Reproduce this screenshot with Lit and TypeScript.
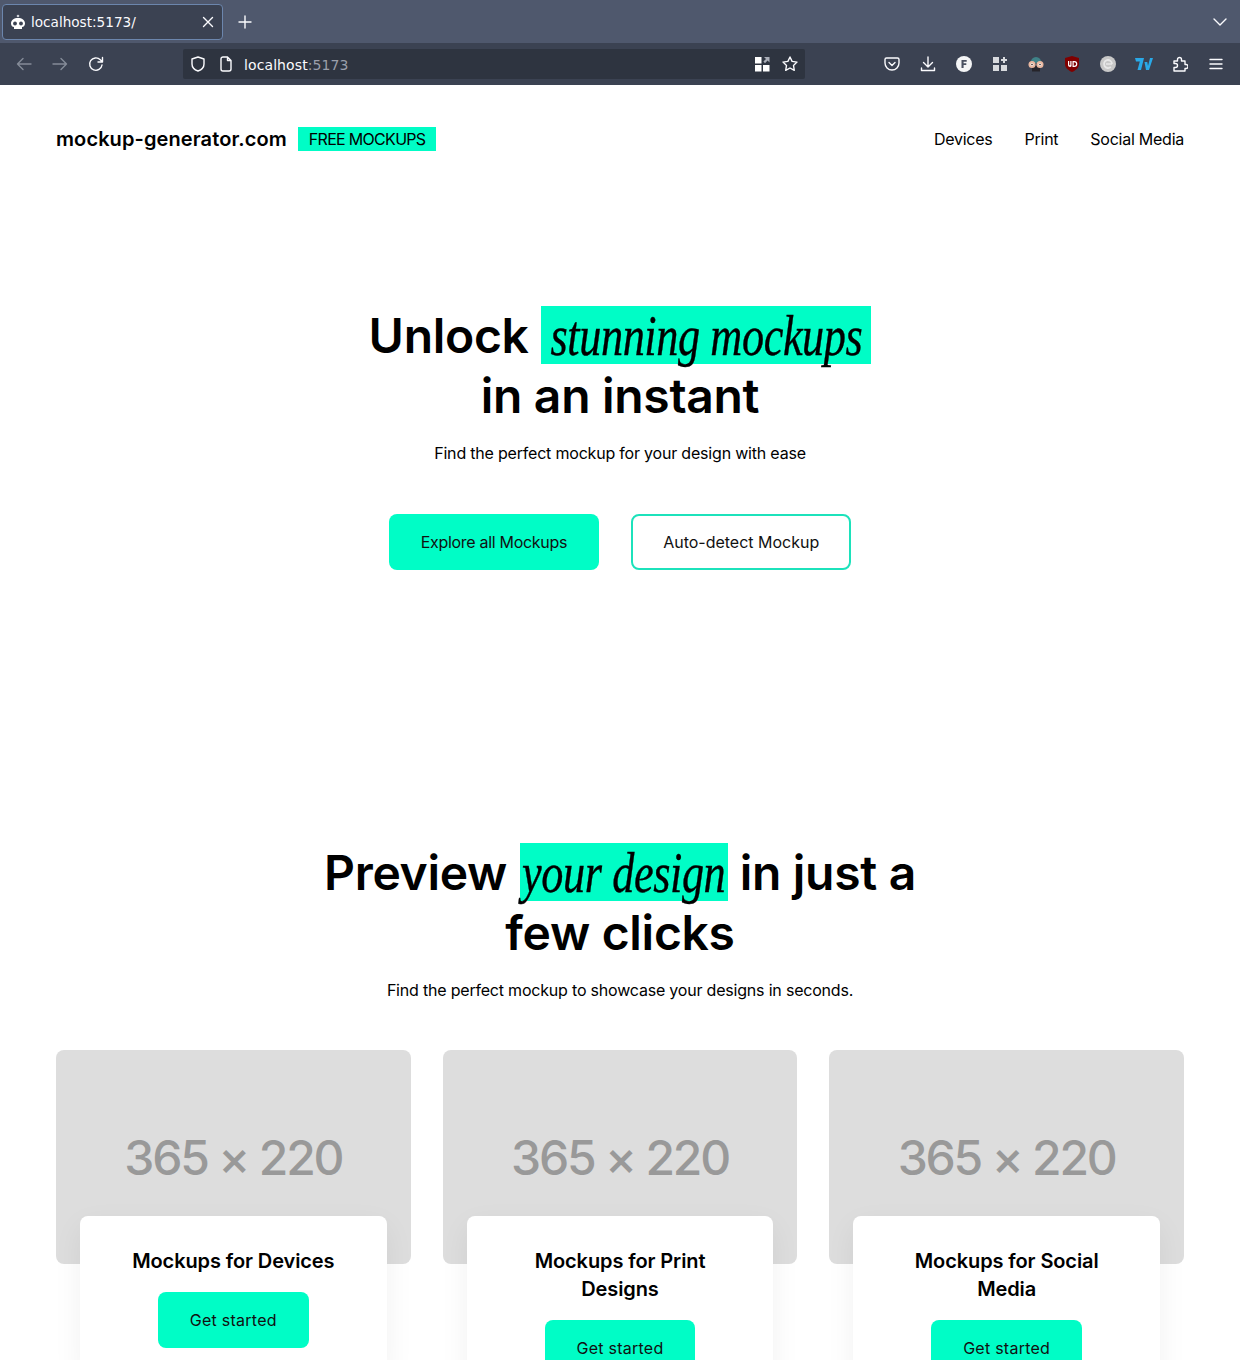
import { LitElement, html, css, svg } from 'lit';
import { customElement } from 'lit/decorators.js';

const cards = [
    { title: 'Mockups for Devices' },
    { title: 'Mockups for Print Designs' },
    { title: 'Mockups for Social Media' },
];

const line = (d: string) => svg`<path d=${d} fill="none" stroke="currentColor" stroke-width="1.4" stroke-linecap="round" stroke-linejoin="round"/>`;

@customElement('browser-chrome')
export class BrowserChrome extends LitElement {
    static styles = css`
      :host {
        display: block;
        font-family: 'DejaVu Sans', sans-serif;
        color: #fbfbfe;
      }

      .tabs {
        height: 43px;
        background: #4f586d;
        display: flex;
        align-items: center;
        padding: 0 12px 0 2px;
        box-sizing: border-box;
      }

      .tab {
        width: 221px;
        height: 36px;
        box-sizing: border-box;
        margin-top: 1px;
        background: #3b4252;
        border: 1px solid #6c86ad;
        border-radius: 4px;
        display: flex;
        align-items: center;
        padding: 0 6px 0 7px;
        gap: 5px;
        font-size: 13.6px;
      }

      .tab-title {
        flex: 1;
      }

      .new-tab {
        margin-left: 14px;
      }

      .spacer {
        flex: 1;
      }

      .toolbar {
        height: 42px;
        background: #3b4252;
        display: flex;
        align-items: center;
      }

      .nav {
        width: 183px;
        display: flex;
        align-items: center;
        gap: 20px;
        padding-left: 16px;
        box-sizing: border-box;
      }

      .dim {
        color: #858b98;
      }

      .urlbar {
        width: 622px;
        height: 30px;
        background: #2e3440;
        border-radius: 2px;
        display: flex;
        align-items: center;
        padding: 0 7px;
        box-sizing: border-box;
        font-size: 14px;
      }

      .urlbar .shield {
        margin-right: 12px;
      }

      .urlbar .page {
        margin-right: 10px;
      }

      .url {
        flex: 1;
        padding-top: 1px;
        letter-spacing: 0.1px;
      }

      .url span {
        color: #9a9fab;
      }

      .grid-icon {
        margin-right: 12px;
      }

      .actions {
        flex: 1;
        display: flex;
        align-items: center;
        justify-content: flex-end;
        gap: 20px;
        padding-right: 16px;
      }

      .wide-icon {
        margin: 0 -1px;
      }

      svg {
        display: block;
        flex: none;
      }
    `;

    render() {
        return html`
      <div class="tabs">
        <div class="tab">
          <svg width="16" height="16" viewBox="0 0 16 16">
            <circle cx="8" cy="2" r="1.300" fill="#c9ccd2" />
            <path d="M1 9.500C1 6 4 4 8 4s7 2 7 5.500c0 2-1.200 3.200-3 3.600V15H4v-1.900C2.200 12.700 1 11.500 1 9.500z" fill="#fff" />
            <circle cx="5" cy="9.500" r="1.900" fill="#3b4252" />
            <circle cx="11" cy="9.500" r="1.900" fill="#3b4252" />
          </svg>
          <span class="tab-title">localhost:5173/</span>
          <svg width="16" height="16" viewBox="0 0 16 16">${line('M3.500 3.500l9 9M12.500 3.500l-9 9')}</svg>
        </div>
        <svg class="new-tab" width="16" height="16" viewBox="0 0 16 16">${line('M8 2v12M2 8h12')}</svg>
        <div class="spacer"></div>
        <svg width="16" height="16" viewBox="0 0 16 16">${line('M2 5l6 6 6-6')}</svg>
      </div>
      <div class="toolbar">
        <div class="nav">
          <svg class="dim" width="16" height="16" viewBox="0 0 16 16">${line('M15 8H1.500M7 2.500L1.500 8 7 13.500')}</svg>
          <svg class="dim" width="16" height="16" viewBox="0 0 16 16">${line('M1 8h13.500M9 2.500L14.500 8 9 13.500')}</svg>
          <svg width="16" height="16" viewBox="0 0 16 16">${line('M14 9a6.200 6.200 0 1 1-1.700-5.200L14.500 6M14.500 1.500V6H10')}</svg>
        </div>
        <div class="urlbar">
          <svg class="shield" width="16" height="16" viewBox="0 0 16 16">${line('M8 1l6 2v5c0 3.500-3 6-6 7-3-1-6-3.500-6-7V3z')}</svg>
          <svg class="page" width="16" height="16" viewBox="0 0 16 16">${line('M3 3a2 2 0 0 1 2-2h4.500L13 4.500V13a2 2 0 0 1-2 2H5a2 2 0 0 1-2-2zM9.500 1v3.500H13')}</svg>
          <div class="url">localhost<span>:5173</span></div>
          <svg class="grid-icon" width="16" height="16" viewBox="0 0 16 16" fill="#fff">
            <rect x="1" y="1" width="6.500" height="6.500" />
            <rect x="1" y="9" width="6.500" height="6.500" />
            <rect x="9" y="9" width="6.500" height="6.500" />
            <path d="M10 1h5.500v5.500l-1.900-1.900L11 7.200 9.400 5.600 12 3z" fill="#a9adb7" />
          </svg>
          <svg width="16" height="16" viewBox="0 0 16 16">${line('M8 1l2.100 4.400 4.900.7-3.500 3.400.8 4.800L8 12l-4.300 2.300.8-4.800L1 6.100l4.900-.7z')}</svg>
        </div>
        <div class="actions">
          <svg width="16" height="16" viewBox="0 0 16 16">${line('M2.500 2h11A1.500 1.500 0 0 1 15 3.500V7a7 7 0 0 1-14 0V3.500A1.500 1.500 0 0 1 2.500 2zM5 6.500l3 3 3-3')}</svg>
          <svg width="16" height="16" viewBox="0 0 16 16">${line('M8 1v10M3.500 6.500L8 11l4.500-4.500M1.500 12v2.500h13V12')}</svg>
          <svg width="16" height="16" viewBox="0 0 16 16">
            <circle cx="8" cy="8" r="8" fill="#f4f5f6" />
            <path d="M5.500 4h5.200v1.800H7.600v1.500h2.700v1.700H7.600V12H5.500z" fill="#4a5161" />
          </svg>
          <svg width="16" height="16" viewBox="0 0 16 16" fill="#d8dade">
            <rect x="1" y="1" width="6" height="6" />
            <rect x="1" y="9" width="6" height="6" />
            <rect x="9" y="9" width="6" height="6" />
            <path d="M11 1h2v2h2v2h-2v2h-2V5H9V3h2z" />
          </svg>
          <svg class="wide-icon" width="18" height="16" viewBox="0 0 18 16">
            <path d="M3.500 7a5.500 6 0 0 1 11 0z" fill="#3f8288" />
            <rect x="5" y="10" width="8" height="5.500" fill="#26242a" />
            <circle cx="5" cy="8.500" r="3.500" fill="#e9b7a0" />
            <circle cx="13" cy="8.500" r="3.500" fill="#e9b7a0" />
            <circle cx="5" cy="8.500" r="1.600" fill="#f7efe8" />
            <circle cx="13" cy="8.500" r="1.600" fill="#f7efe8" />
            <circle cx="5" cy="8.500" r="0.800" fill="#3a2a2a" />
            <circle cx="13" cy="8.500" r="0.800" fill="#3a2a2a" />
          </svg>
          <svg width="16" height="16" viewBox="0 0 16 16">
            <path d="M8 0l7 2v6c0 4-3.500 6.500-7 8-3.500-1.500-7-4-7-8V2z" fill="#800000" />
            <path d="M4 5v4a2 2 0 0 0 3.500 1.300V5H6.300v4a.8.8 0 0 1-1.100 0V5zM8.500 5v6h1.800a3 3 0 0 0 0-6zm1.200 1.200h.6a1.800 1.800 0 0 1 0 3.600h-.6z" fill="#fff" />
          </svg>
          <svg width="16" height="16" viewBox="0 0 16 16">
            <circle cx="8" cy="8" r="8" fill="#c8c8c8" />
            <path d="M12 8a4 4 0 1 0-1.200 2.900" fill="none" stroke="#e8e8e8" stroke-width="1.800" />
            <path d="M6 8h6" stroke="#e8e8e8" stroke-width="1.500" />
          </svg>
          <svg class="wide-icon" width="18" height="16" viewBox="0 0 18 16">
            <path d="M0 2h9L6 14H2.500l2.300-8.500H1z" fill="#29a9e8" />
            <path d="M9.500 6h2.800l.7 4 2-8H18l-4 12h-3z" fill="#29a9e8" />
          </svg>
          <svg width="16" height="16" viewBox="0 0 16 16">${line('M2 5h3.500V3.500a2 2 0 0 1 4 0V5H13v3.500h1a2 2 0 0 1 0 4h-1V15H2v-3.500h1.500a2 2 0 0 0 0-4H2z')}</svg>
          <svg width="16" height="16" viewBox="0 0 16 16">${line('M2 3.500h12M2 8h12M2 12.500h12')}</svg>
        </div>
      </div>
    `;
    }
}

@customElement('app-root')
export class AppRoot extends LitElement {
    static styles = css`
      :host {
        display: block;
        height: 1360px;
        overflow: hidden;
        background: #fff;
        color: #000;
        font-family: 'Inter', 'Noto Sans', sans-serif;
      }

      .page {
        padding: 0 56px;
      }

      header {
        height: 108px;
        display: flex;
        align-items: center;
        justify-content: space-between;
      }

      .brand {
        display: flex;
        align-items: center;
        gap: 11px;
      }

      .logo {
        font-size: 20px;
        font-weight: 600;
        letter-spacing: 0.1px;
      }

      .tag {
        background: #00fdc6;
        font-size: 16px;
        line-height: 24px;
        padding: 0 11px;
        letter-spacing: -0.7px;
      }

      nav {
        display: flex;
        gap: 32px;
        font-size: 16px;
        letter-spacing: -0.25px;
      }

      .hero {
        padding-top: 113px;
        height: 650px;
        box-sizing: border-box;
      }

      .center {
        text-align: center;
      }

      h1,
      h2 {
        margin: 0;
        font-size: 48px;
        line-height: 60px;
        font-weight: 600;
        letter-spacing: -0.3px;
      }

      .mark {
        display: inline-flex;
        justify-content: center;
        vertical-align: top;
        background: #00fdc6;
        height: 58px;
        line-height: 60px;
        font-family: 'Liberation Serif', serif;
        font-style: italic;
        font-weight: 400;
        font-size: 56px;
        letter-spacing: -0.5px;
        margin-left: 1px;
      }

      .mark.long {
        width: 330px;
      }

      .mark.short {
        width: 208px;
      }

      .mark span {
        flex: none;
        white-space: nowrap;
        transform: scaleX(0.79);
        -webkit-text-stroke: 0.4px #000;
      }

      .sub {
        margin: 15px 0 0;
        font-size: 16px;
        line-height: 24px;
        letter-spacing: -0.2px;
      }

      .actions {
        margin-top: 49px;
        display: flex;
        justify-content: center;
        gap: 32px;
      }

      .btn {
        height: 56px;
        box-sizing: border-box;
        padding: 0 32px;
        border-radius: 8px;
        display: flex;
        align-items: center;
        justify-content: center;
        font-size: 16px;
        color: #111;
      }

      .btn.solid {
        background: #00fdc6;
        letter-spacing: -0.3px;
      }

      .btn.line {
        border: 2px solid #1ce2bb;
        padding: 0 30px;
      }

      .cards {
        margin-top: 48px;
        display: grid;
        grid-template-columns: repeat(3, 1fr);
        gap: 32px;
      }

      .ph {
        height: 214px;
        border-radius: 8px;
        background: #dddddd;
        color: #999999;
        font-size: 48px;
        font-weight: 500;
        display: flex;
        align-items: center;
        justify-content: center;
        letter-spacing: -2.2px;
      }

      .body {
        margin: -48px 24px 0;
        position: relative;
        background: #fff;
        border-radius: 8px;
        padding: 31px 32px 24px;
        box-shadow: 0 10px 30px rgba(0, 0, 0, 0.06);
        text-align: center;
      }

      .body h3 {
        margin: 0;
        font-size: 20px;
        line-height: 28px;
        font-weight: 600;
        letter-spacing: -0.1px;
      }

      .body .btn {
        display: inline-flex;
        margin-top: 17px;
        background: #00fdc6;
        letter-spacing: 0.25px;
      }
    `;

    render() {
        return html`
      <browser-chrome></browser-chrome>
      <div class="page">
        <header>
          <div class="brand">
            <div class="logo">mockup-generator.com</div>
            <div class="tag">FREE MOCKUPS</div>
          </div>
          <nav>
            <span>Devices</span>
            <span>Print</span>
            <span>Social Media</span>
          </nav>
        </header>

        <section class="hero center">
          <h1>Unlock <span class="mark long"><span>stunning mockups</span></span><br />in an instant</h1>
          <p class="sub">Find the perfect mockup for your design with ease</p>
          <div class="actions">
            <div class="btn solid">Explore all Mockups</div>
            <div class="btn line">Auto-detect Mockup</div>
          </div>
        </section>

        <section class="center">
          <h2>Preview <span class="mark short"><span>your design</span></span> in just a<br />few clicks</h2>
          <p class="sub">Find the perfect mockup to showcase your designs in seconds.</p>
          <div class="cards">
            ${cards.map(c => html`
              <div>
                <div class="ph"><span>365 × 220</span></div>
                <div class="body">
                  <h3>${c.title}</h3>
                  <div class="btn">Get started</div>
                </div>
              </div>
            `)}
          </div>
        </section>
      </div>
    `;
    }
}
